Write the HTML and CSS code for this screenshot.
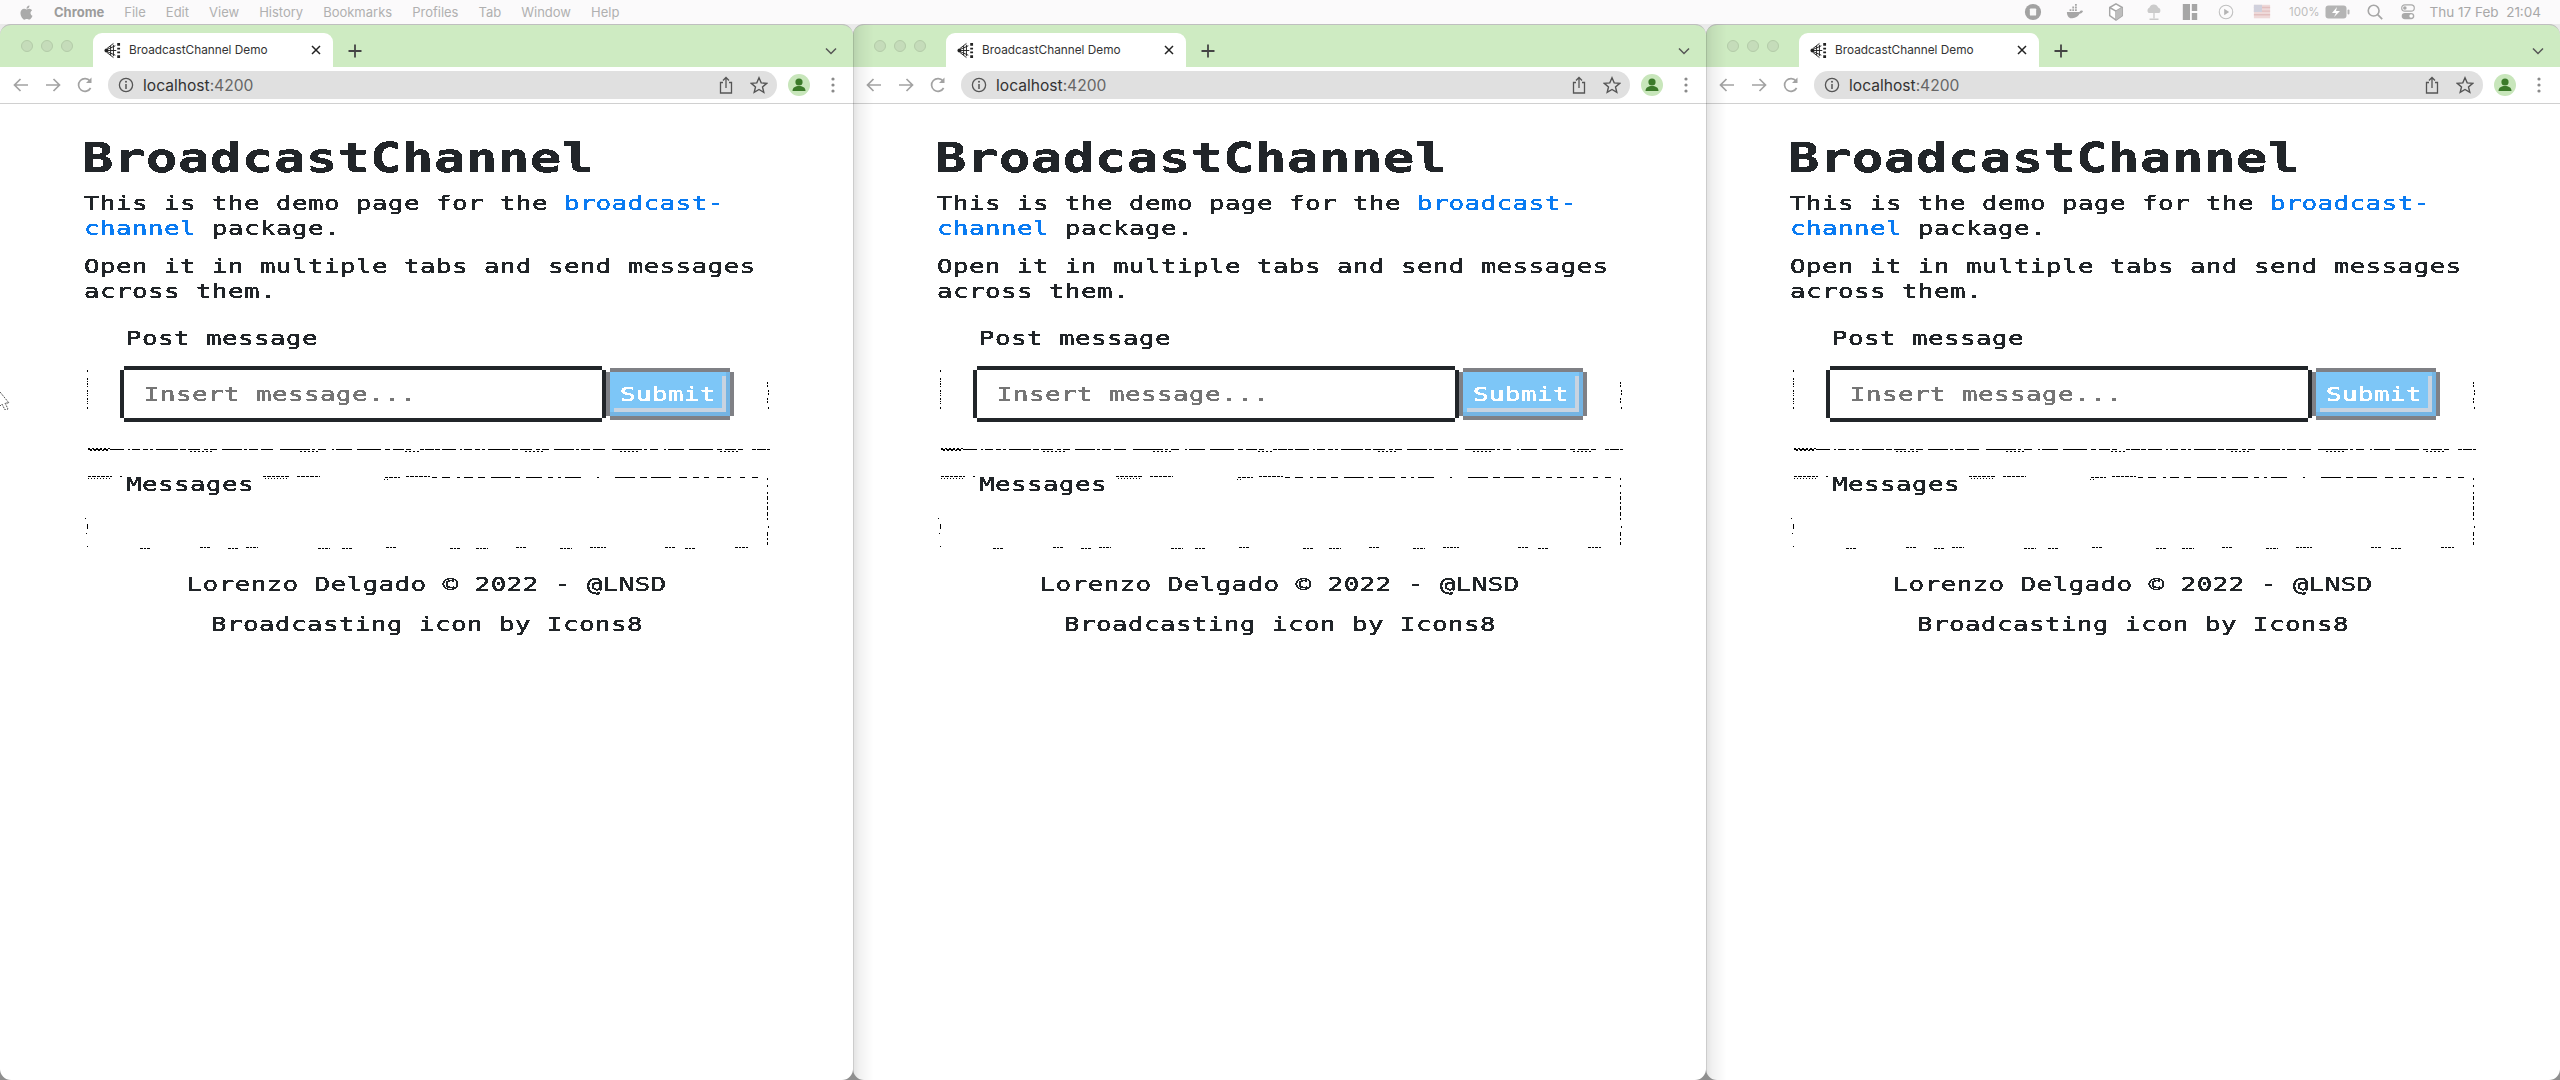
FILE: index.html
```html
<!DOCTYPE html>
<html lang="en">
<head>
<meta charset="utf-8">
<title>BroadcastChannel Demo</title>
<link rel="stylesheet" href="styles.css">
</head>
<body>
<svg class="defs" width="0" height="0" aria-hidden="true">
  <defs>
    <filter id="crisp" x="-5%" y="-20%" width="110%" height="140%" color-interpolation-filters="sRGB">
      <feComponentTransfer><feFuncA type="discrete" tableValues="0 1 1 1 1 1"/></feComponentTransfer>
    </filter>
  </defs>
  <symbol id="i-fav" viewBox="0 0 18 18">
    <circle cx="2.5" cy="9" r="2" fill="#222"/>
    <path d="M3 9H13M3 8L12 4M3 10L12 14M3 7L10 1.5M3 11L10 16.5M7 4V14M10 3V15" stroke="#222" stroke-width="1" fill="none"/>
    <path d="M14 1h3v3h-3zM14 6h3v2h-3zM14 10h3v2h-3zM14 14h3v3h-3z" fill="#222"/>
  </symbol>
  <symbol id="i-back" viewBox="0 0 18 18"><path d="M16 9H2.5M8.5 3L2.5 9L8.5 15" fill="none" stroke="#a2a2a2" stroke-width="1.7"/></symbol>
  <symbol id="i-fwd" viewBox="0 0 18 18"><path d="M2 9H15.5M9.5 3L15.5 9L9.5 15" fill="none" stroke="#a2a2a2" stroke-width="1.7"/></symbol>
  <symbol id="i-reload" viewBox="0 0 18 18"><path d="M14.6 12A6.4 6.4 0 1 1 14 5" fill="none" stroke="#a2a2a2" stroke-width="1.7"/><path d="M15.5 1.5V7H10z" fill="#a2a2a2"/></symbol>
  <symbol id="i-info" viewBox="0 0 16 16"><circle cx="8" cy="8" r="6.6" fill="none" stroke="#555" stroke-width="1.3"/><path d="M8 7v5" stroke="#555" stroke-width="1.5"/><circle cx="8" cy="4.8" r="1" fill="#555"/></symbol>
  <symbol id="i-share" viewBox="0 0 18 18"><path d="M6 6.5H3.5V17H14.5V6.5H12M9 12V1.5M6 4.5L9 1.5L12 4.5" fill="none" stroke="#555" stroke-width="1.3"/></symbol>
  <symbol id="i-star" viewBox="0 0 18 18"><path d="M9 1.8L11.2 6.9L16.7 7.4L12.5 11L13.8 16.4L9 13.5L4.2 16.4L5.5 11L1.3 7.4L6.8 6.9Z" fill="none" stroke="#555" stroke-width="1.4"/></symbol>
  <symbol id="i-user" viewBox="0 0 22 22"><circle cx="11" cy="11" r="11" fill="#c8e6bb"/><circle cx="11" cy="8" r="3.6" fill="#3b7a2a"/><path d="M4.5 17c0-3.6 3-5 6.5-5s6.5 1.400 6.500 5z" fill="#3b7a2a"/></symbol>
  <symbol id="i-dots" viewBox="0 0 4 18"><circle cx="2" cy="3" r="1.6" fill="#8a8a8a"/><circle cx="2" cy="9" r="1.6" fill="#8a8a8a"/><circle cx="2" cy="15" r="1.6" fill="#8a8a8a"/></symbol>
  <symbol id="i-plus" viewBox="0 0 18 18"><path d="M9 2.500V15.500M2.500 9H15.500" stroke="#444" stroke-width="1.800"/></symbol>
  <symbol id="i-close" viewBox="0 0 12 12"><path d="M2 2L10 10M10 2L2 10" stroke="#222" stroke-width="1.500"/></symbol>
  <symbol id="i-chev" viewBox="0 0 16 16"><path d="M3 5.500L8 10.500L13 5.500" fill="none" stroke="#555" stroke-width="1.500"/></symbol>
  <symbol id="noise" viewBox="0 0 853 600">
    <g fill="none" stroke="#000" stroke-width="1" shape-rendering="crispEdges">
      <path d="M87 370V373M87 378V388M87 390V396M87 398V404M87 407V410" stroke-dasharray="2 1 1 1"/>
      <path d="M767 382V388M768 390V396M767 398V404M768 407V409" stroke-dasharray="2 1"/>
      <path d="M88 449H770" stroke-dasharray="4 1 9 1 5 2 14 4 2 2 8 3 5 2 3 3 22 2 6 2 12 4 4 2 7 5 20 2 3 2 9 3 12 7 30 2 3 3 8 6 2 2 16 5 24 4 5 3 11 2 5 9"/>
      <path d="M88 448H112M90 450H110M190 451H212M300 451H320M405 451H420M525 451H545M620 451H640M720 451H738" stroke-dasharray="2 2"/>
      <path d="M88 476H112M120 476H122M263 476H290M297 476H320M385 477H400M406 476H430" stroke-dasharray="3 1 4 1"/>
      <path d="M88 478H110M265 478H288M384 479H388" stroke-dasharray="1 2"/>
      <path d="M432 477H770" stroke-dasharray="5 5 8 7 3 4 9 5 7 6 20 4 5 6 16 6 5 5 3 4 16 16 2 16 20 5 7 4 20 8 8 6 6"/>
      <path d="M767 478V494" stroke-dasharray="2 5"/>
      <path d="M767 496V510M767 512V520M768 526V528M767 532V545" stroke-dasharray="4 2 2 2"/>
      <path d="M85 518V519M87 524V529M86 533V534M87 546V547"/>
      <path d="M140 548H150M200 547H211M228 548H238M246 547H258M318 548H330M342 548H352M386 547H396M450 548H460M476 548H488M516 547H526M560 548H572M590 547H606M665 547H676M685 548H696M735 547H748" stroke-dasharray="3 1 2 1"/>
    </g>
  </symbol>
  <symbol id="s-stop" viewBox="0 0 20 20"><circle cx="10" cy="10" r="9" fill="#a2a2a2"/><rect x="6.500" y="6" width="7" height="8" rx="1" fill="#f8f8f8"/></symbol>
  <symbol id="s-docker" viewBox="0 0 20 20"><path d="M1 10H15C16 8 18 8 19 9C18 11 17 12 15 12C13 16 9 17 6 17C3 17 1 14 1 10Z" fill="#a6a6a6"/><path d="M4 7h2v2H4zM7 7h2v2H7zM10 7h2v2h-2zM7 4h2v2H7zM10 4h2v2h-2zM10 1h2v2h-2z" fill="#a6a6a6"/></symbol>
  <symbol id="s-box" viewBox="0 0 20 20"><path d="M10 1L17 5V14L10 19L3 14V5Z" fill="#fff" stroke="#a6a6a6" stroke-width="1.600"/><path d="M3 5L10 9L17 5M10 9V19" fill="none" stroke="#a6a6a6" stroke-width="1.600"/><path d="M10 9L17 5V14L10 19Z" fill="#bdbdbd"/></symbol>
  <symbol id="s-cloud" viewBox="0 0 20 20"><path d="M4 11A3.500 3.500 0 0 1 5 5A5 5 0 0 1 14.500 5A3.500 3.500 0 0 1 16 11Z" fill="#cbcbcb"/><path d="M10 11V17M5 18H15" stroke="#cbcbcb" stroke-width="1.500"/></symbol>
  <symbol id="s-tiles" viewBox="0 0 20 20"><path d="M2 1h8v18H2zM12 1h6v8h-6zM12 11h6v8h-6z" fill="#a6a6a6"/></symbol>
  <symbol id="s-play" viewBox="0 0 20 20"><circle cx="10" cy="10" r="7.500" fill="none" stroke="#c0c0c0" stroke-width="1.200"/><path d="M8 6.500L13.500 10L8 13.500Z" fill="#b4b4b4"/></symbol>
  <symbol id="s-flag" viewBox="0 0 20 20"><rect x="1" y="2" width="18" height="15" fill="#eed9d9"/><path d="M1 5h18M1 9h18M1 13h18" stroke="#e2bfbf" stroke-width="1.500"/><rect x="1" y="2" width="9" height="8" fill="#d0d0dc"/></symbol>
  <symbol id="s-batt" viewBox="0 0 25 14"><rect x="0.500" y="0.500" width="21" height="13" rx="3" fill="#b4b4b4"/><rect x="22.500" y="4.500" width="2" height="5" rx="1" fill="#b4b4b4"/><path d="M12 2L7 8H11L9 12L15 6H11Z" fill="#fff"/></symbol>
  <symbol id="s-search" viewBox="0 0 20 20"><circle cx="8.500" cy="8.500" r="6" fill="none" stroke="#a6a6a6" stroke-width="1.800"/><path d="M13 13L18 18" stroke="#a6a6a6" stroke-width="2"/></symbol>
  <symbol id="s-cc" viewBox="0 0 20 20"><rect x="3" y="2" width="14" height="7" rx="3.500" fill="none" stroke="#aaa" stroke-width="1.300"/><circle cx="6.500" cy="5.500" r="2" fill="#aaa"/><rect x="3" y="11" width="14" height="7" rx="3.500" fill="#aaa"/><circle cx="13.500" cy="14.500" r="2" fill="#fff"/></symbol>
</svg>

<header class="menubar">
  <nav class="menu-left">
    <svg class="apple" viewBox="0 0 24 24"><path d="M17.050 20.280c-.98.95-2.050.8-3.080.35-1.090-.46-2.090-.48-3.240 0-1.440.62-2.200.44-3.060-.35C2.790 15.250 3.510 7.590 9.050 7.310c1.350.07 2.290.74 3.080.8 1.180-.24 2.310-.93 3.570-.84 1.510.12 2.650.72 3.400 1.800-3.120 1.870-2.380 5.980.48 7.130-.57 1.500-1.310 2.990-2.540 4.090zM12.030 7.250c-.15-2.230 1.660-4.070 3.740-4.250.29 2.580-2.340 4.500-3.740 4.250z"/></svg>
    <span class="menu-app">Chrome</span>
    <span>File</span><span>Edit</span><span>View</span><span>History</span><span>Bookmarks</span><span>Profiles</span><span>Tab</span><span>Window</span><span>Help</span>
  </nav>
  <div class="status">
    <svg class="st g22"><use href="#s-stop"/></svg>
    <svg class="st g21"><use href="#s-docker"/></svg>
    <svg class="st g18"><use href="#s-box"/></svg>
    <svg class="st g16"><use href="#s-cloud"/></svg>
    <svg class="st g16"><use href="#s-tiles"/></svg>
    <svg class="st g16"><use href="#s-play"/></svg>
    <svg class="st g17"><use href="#s-flag"/></svg>
    <span class="batt-text">100%</span>
    <svg class="batt"><use href="#s-batt"/></svg>
    <svg class="st st-search"><use href="#s-search"/></svg>
    <svg class="st st-cc"><use href="#s-cc"/></svg>
    <time class="clock">Thu 17 Feb&nbsp; 21:04</time>
  </div>
</header>

<main class="desktop">
  <section class="window">
    <div class="tabstrip">
      <div class="lights"><i></i><i></i><i></i></div>
      <div class="tab"><svg class="fav"><use href="#i-fav"/></svg><span class="tab-title">BroadcastChannel Demo</span><svg class="close"><use href="#i-close"/></svg></div>
      <svg class="plus"><use href="#i-plus"/></svg>
      <svg class="chev"><use href="#i-chev"/></svg>
    </div>
    <div class="toolbar">
      <svg class="tb"><use href="#i-back"/></svg><svg class="tb"><use href="#i-fwd"/></svg><svg class="tb"><use href="#i-reload"/></svg>
      <div class="omni"><svg class="info"><use href="#i-info"/></svg><span class="url">localhost<em>:4200</em></span><svg class="tb share"><use href="#i-share"/></svg><svg class="tb"><use href="#i-star"/></svg></div>
      <svg class="avatar"><use href="#i-user"/></svg>
      <svg class="dots"><use href="#i-dots"/></svg>
    </div>
    <div class="page">
      <svg class="noise"><use href="#noise"/></svg>
      <svg class="cursor" viewBox="0 0 10 18"><path d="M0 0L9 11L5 11L8 17L5 18L2 12L0 14" fill="#fff" stroke="#555" stroke-width="1" stroke-dasharray="2 1"/></svg>
      <h1 class="title">BroadcastChannel</h1>
      <p class="copy">This is the demo page for the <a href="#">broadcast-</a><br><a href="#">channel</a> package.</p>
      <p class="copy">Open it in multiple tabs and send messages<br>across them.</p>
      <h2 class="label label-post">Post message</h2>
      <form class="post">
        <div class="field"><input class="input" type="text" placeholder="Insert message..."></div>
        <button class="submit" type="button"><span>Submit</span></button>
      </form>
      <h2 class="label label-msg">Messages</h2>
      <footer class="foot"><p>Lorenzo Delgado © 2022 - @LNSD</p><p>Broadcasting icon by Icons8</p></footer>
    </div>
  </section>

  <section class="window shaded">
    <div class="tabstrip">
      <div class="lights"><i></i><i></i><i></i></div>
      <div class="tab"><svg class="fav"><use href="#i-fav"/></svg><span class="tab-title">BroadcastChannel Demo</span><svg class="close"><use href="#i-close"/></svg></div>
      <svg class="plus"><use href="#i-plus"/></svg>
      <svg class="chev"><use href="#i-chev"/></svg>
    </div>
    <div class="toolbar">
      <svg class="tb"><use href="#i-back"/></svg><svg class="tb"><use href="#i-fwd"/></svg><svg class="tb"><use href="#i-reload"/></svg>
      <div class="omni"><svg class="info"><use href="#i-info"/></svg><span class="url">localhost<em>:4200</em></span><svg class="tb share"><use href="#i-share"/></svg><svg class="tb"><use href="#i-star"/></svg></div>
      <svg class="avatar"><use href="#i-user"/></svg>
      <svg class="dots"><use href="#i-dots"/></svg>
    </div>
    <div class="page">
      <svg class="noise"><use href="#noise"/></svg>
      <h1 class="title">BroadcastChannel</h1>
      <p class="copy">This is the demo page for the <a href="#">broadcast-</a><br><a href="#">channel</a> package.</p>
      <p class="copy">Open it in multiple tabs and send messages<br>across them.</p>
      <h2 class="label label-post">Post message</h2>
      <form class="post">
        <div class="field"><input class="input" type="text" placeholder="Insert message..."></div>
        <button class="submit" type="button"><span>Submit</span></button>
      </form>
      <h2 class="label label-msg">Messages</h2>
      <footer class="foot"><p>Lorenzo Delgado © 2022 - @LNSD</p><p>Broadcasting icon by Icons8</p></footer>
    </div>
  </section>

  <section class="window shaded">
    <div class="tabstrip">
      <div class="lights"><i></i><i></i><i></i></div>
      <div class="tab"><svg class="fav"><use href="#i-fav"/></svg><span class="tab-title">BroadcastChannel Demo</span><svg class="close"><use href="#i-close"/></svg></div>
      <svg class="plus"><use href="#i-plus"/></svg>
      <svg class="chev"><use href="#i-chev"/></svg>
    </div>
    <div class="toolbar">
      <svg class="tb"><use href="#i-back"/></svg><svg class="tb"><use href="#i-fwd"/></svg><svg class="tb"><use href="#i-reload"/></svg>
      <div class="omni"><svg class="info"><use href="#i-info"/></svg><span class="url">localhost<em>:4200</em></span><svg class="tb share"><use href="#i-share"/></svg><svg class="tb"><use href="#i-star"/></svg></div>
      <svg class="avatar"><use href="#i-user"/></svg>
      <svg class="dots"><use href="#i-dots"/></svg>
    </div>
    <div class="page">
      <svg class="noise"><use href="#noise"/></svg>
      <h1 class="title">BroadcastChannel</h1>
      <p class="copy">This is the demo page for the <a href="#">broadcast-</a><br><a href="#">channel</a> package.</p>
      <p class="copy">Open it in multiple tabs and send messages<br>across them.</p>
      <h2 class="label label-post">Post message</h2>
      <form class="post">
        <div class="field"><input class="input" type="text" placeholder="Insert message..."></div>
        <button class="submit" type="button"><span>Submit</span></button>
      </form>
      <h2 class="label label-msg">Messages</h2>
      <footer class="foot"><p>Lorenzo Delgado © 2022 - @LNSD</p><p>Broadcasting icon by Icons8</p></footer>
    </div>
  </section>
</main>
</body>
</html>
```
FILE: styles.css
```css
* { box-sizing: border-box; }
html, body { margin: 0; height: 100%; }
body {
  display: flex;
  flex-direction: column;
  height: 1080px;
  overflow: hidden;
  background: #fafafa;
  font-family: Inter, "Liberation Sans", sans-serif;
}
.defs { position: absolute; }
svg { display: block; flex: none; }

/* macOS menu bar */
.menubar {
  height: 24px;
  flex: none;
  display: flex;
  align-items: center;
  justify-content: space-between;
  background: #fbfafb;
  color: #b0b0b0;
  font-size: 13px;
  padding: 0 19px 0 17px;
}
.menu-left { display: flex; align-items: center; gap: 20px; }
.apple { width: 19px; height: 19px; fill: #aaa; margin-right: -2px; }
.menu-app { font-weight: 700; color: #9c9c9c; }
.status { display: flex; align-items: center; }
.st { width: 20px; height: 18px; }
.g22 { margin-right: 22px; }
.g21 { margin-right: 21px; }
.g18 { margin-right: 18px; }
.g17 { margin-right: 17px; }
.g16 { margin-right: 16px; }
.batt-text { font-size: 11.5px; color: #bdbdbd; }
.batt { width: 25px; height: 14px; margin-left: 5px; }
.st-search { margin-left: 15px; }
.st-cc { margin-left: 13px; }
.clock { margin-left: 12px; font-size: 13.5px; color: #a8a8a8; }

/* Browser windows */
.desktop {
  flex: 1;
  display: grid;
  grid-template-columns: 853px 853px 854px;
  background: linear-gradient(#eaeaea 50%, #8f8f8f 50%);
}
.window {
  position: relative;
  display: flex;
  flex-direction: column;
  overflow: hidden;
  border-radius: 11px;
  background: #fff;
  box-shadow: inset 0 1px 0 #bdbdbd;
}
.window.shaded::after {
  content: "";
  position: absolute;
  inset: 0 auto 0 0;
  width: 20px;
  background: linear-gradient(90deg, rgba(0,0,0,.1), rgba(0,0,0,.05) 30%, rgba(0,0,0,0));
  border-left: 1px solid rgba(0,0,0,.2);
  pointer-events: none;
}
.tabstrip {
  height: 43px;
  flex: none;
  display: flex;
  background: #ceebc2;
  border-top: 1px solid #bfbfbf;
  border-radius: 11px 11px 0 0;
}
.lights { width: 93px; flex: none; display: flex; gap: 8px; padding: 15px 0 0 21px; }
.lights i {
  width: 12px;
  height: 12px;
  border-radius: 50%;
  background: #c5dcba;
  border: 1px solid #b3cba8;
}
.tab {
  align-self: flex-end;
  width: 240px;
  height: 34px;
  display: flex;
  align-items: center;
  padding-left: 11px;
  background: #fff;
  border-radius: 9px 9px 0 0;
  font-size: 11.8px;
  color: #333;
}
.fav { width: 17px; height: 17px; }
.tab-title { margin-left: 8px; width: 181px; white-space: nowrap; }
.close { width: 12px; height: 12px; }
.plus { width: 18px; height: 18px; margin: 17px 0 0 13px; }
.chev { width: 16px; height: 16px; margin: 18px 14px 0 auto; }

.toolbar {
  height: 37px;
  flex: none;
  display: flex;
  align-items: center;
  gap: 14px;
  padding-left: 12px;
  background: #fff;
  border-bottom: 1px solid #d0d0d0;
}
.tb { width: 18px; height: 18px; }
.omni {
  width: 669px;
  height: 28px;
  display: flex;
  align-items: center;
  padding: 0 9px 0 10px;
  background: #e0e0e0;
  border-radius: 14px;
}
.info { width: 16px; height: 16px; }
.url { margin-left: 9px; font-size: 15.6px; color: #333; }
.url em { font-style: normal; color: #666; }
.share { margin: 0 15px 0 auto; }
.avatar { width: 22px; height: 22px; margin-left: -3px; }
.dots { width: 4px; height: 18px; margin-left: 7px; }

/* Page: wide pixel lettering on a mono face */
.page {
  position: relative;
  flex: 1;
  padding: 30px 0 0 83px;
  color: #212529;
  font-family: "DejaVu Sans Mono", "Liberation Mono", monospace;
  font-size: 19px;
  letter-spacing: .41px;
}
.noise { position: absolute; left: 0; top: -104px; width: 853px; height: 600px; pointer-events: none; }
.cursor { position: absolute; left: 0; top: 288px; width: 10px; height: 18px; }
.title,
.copy,
.label,
.foot p,
.input,
.submit span {
  transform-origin: left center;
  filter: url(#crisp);
}
.title {
  margin: 0;
  font-size: 40px;
  line-height: 48px;
  font-weight: 700;
  letter-spacing: .535px;
  transform: scaleX(1.3);
  margin-left: -1px;
}
.copy {
  width: 511px;
  margin: 0 0 14px 1px;
  line-height: 24.6px;
  transform: scaleX(1.35);
}
.title + .copy { margin-top: 9px; }
.copy a { color: #0a7bf2; text-decoration: none; }
.label {
  margin: 0;
  font-size: inherit;
  font-weight: 400;
  line-height: 25px;
  transform: scaleX(1.35);
}
.label-post { margin: 23px 0 0 43px; }
.label-msg { margin: 54px 0 0 43px; }
.post { display: flex; margin: 19px 0 0 41px; align-items: center; }
.field {
  width: 478px;
  height: 48px;
  background: #fff;
  box-shadow: 0 -4px #212529, 0 4px #212529, -4px 0 #212529, 4px 0 #212529;
  padding-left: 20px;
  display: flex;
  align-items: center;
}
.input {
  width: 330px;
  border: 0;
  outline: 0;
  padding: 0;
  background: transparent;
  font: inherit;
  letter-spacing: inherit;
  color: #212529;
  transform: scaleX(1.35);
}
.input::placeholder { color: #757575; opacity: 1; }
.submit {
  position: relative;
  width: 120px;
  height: 44px;
  margin-left: 8px;
  padding: 0;
  border: 0;
  background: #7dc6f7;
  box-shadow: 0 -4px #7f8085, 0 4px #7f8085, -4px 0 #7f8085, 4px 0 #7f8085, inset -4px -4px #74b4e3;
  color: #fff;
  font: inherit;
  letter-spacing: inherit;
  text-align: left;
}
.submit::after {
  content: "";
  position: absolute;
  inset: 4px;
  box-shadow: inset -4px -4px #c8d3e0;
}
.submit span { display: block; margin-left: 10px; width: 74px; transform: scaleX(1.35); }
.foot {
  display: flex;
  flex-direction: column;
  align-items: center;
  margin: 75px 0 0 -83px;
}
.foot p { margin: 0 0 15px; line-height: 25px; transform: scaleX(1.35); transform-origin: center; }
```
